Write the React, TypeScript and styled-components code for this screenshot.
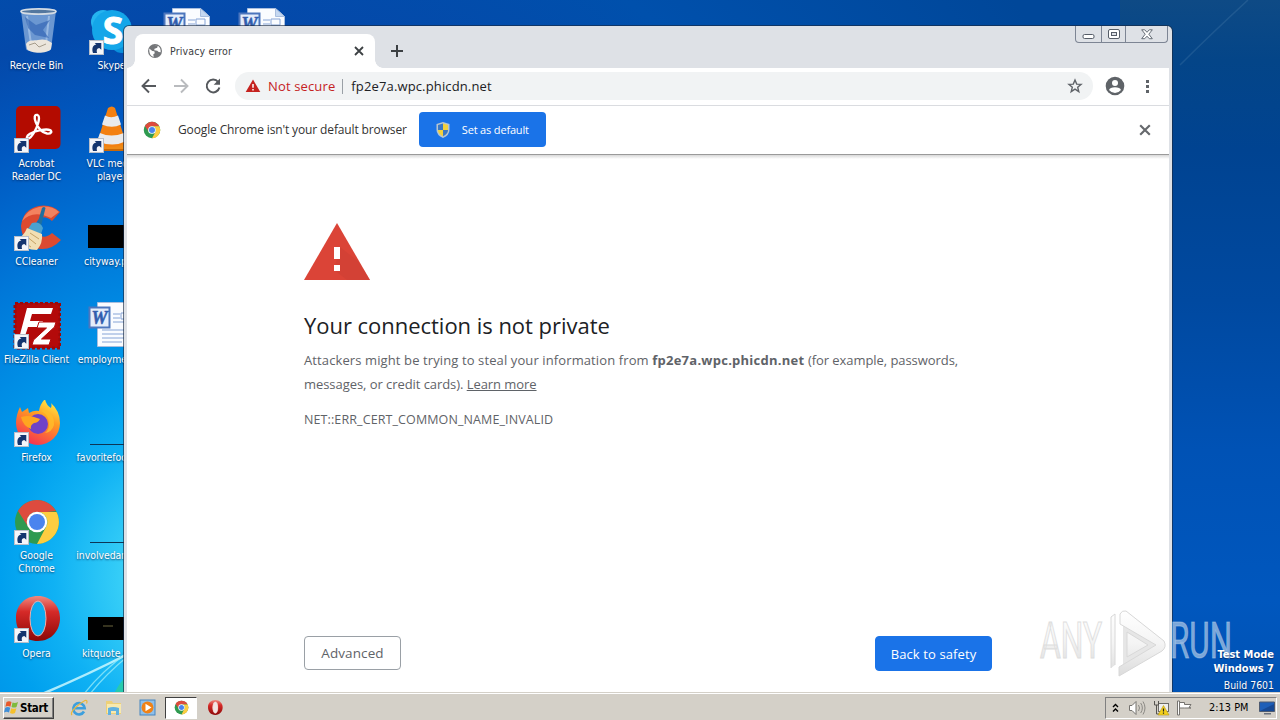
import type { ReactNode } from 'react';
import styled, { createGlobalStyle } from 'styled-components';

const GlobalStyle = createGlobalStyle`
body {
margin: 0;
overflow: hidden;
}
* {
box-sizing: border-box;
}
`

const systemFont = `"DejaVu Sans Condensed", "DejaVu Sans", sans-serif`
const uiFont = `"Open Sans", "Noto Sans", sans-serif`

const Screen = styled.div`
position: relative;
width: 1280px;
height: 720px;
overflow: hidden;
display: flex;
flex-direction: column;
font-family: ${systemFont};
background:
linear-gradient(to bottom, #0e4a85 0, #044588 60px, #004391 150px, #0049a0 300px, #0052b5 450px, #0057be 600px, #0052b4 700px) right top / 160px 720px no-repeat,
radial-gradient(circle at 200px 580px, #5fe0fa 0, #35cdf7 80px, #10b2f4 145px, #00a0ee 200px, #0088e2 290px, #006fd3 380px, #0058c0 470px, #0449aa 560px, #0050ac 720px, #004799 1000px);
`

const Streaks = styled.svg`
position: absolute;
left: 0;
top: 0;
`

/* Desktop icons */

const Desktop = styled.div`
flex: 1;
min-height: 0;
display: flex;
padding-top: 8px;
margin-left: -1px;
`

const Column = styled.div`
width: 75px;
flex: none;
`

const Shortcut = styled.div`
height: 98px;
display: flex;
flex-direction: column;
align-items: center;
gap: 3px;
`

const ShortcutLabel = styled.div`
font-size: 10.4px;
line-height: 13px;
letter-spacing: -0.03px;
color: #fff;
text-align: center;
white-space: pre;
text-shadow: 0 1px 2px rgba(0, 20, 60, 0.7);
`

/* Browser window */

const Window = styled.div`
position: absolute;
left: 124px;
top: 26px;
width: 1048px;
height: 666px;
padding: 0 3px;
display: flex;
flex-direction: column;
background: #dee1e6;
border-radius: 5px 5px 0 0;
box-shadow: 0 0 0 1px rgba(24, 42, 66, 0.65);
font-family: ${uiFont};
`

const TabStrip = styled.div`
height: 42px;
flex: none;
display: flex;
align-items: flex-end;
padding-left: 8px;
`

const Tab = styled.div`
position: relative;
width: 240px;
height: 34px;
padding: 0 11px 0 12px;
display: flex;
align-items: center;
border-radius: 8px 8px 0 0;
background: #fff;

&::before, &::after {
content: '';
position: absolute;
bottom: 0;
width: 8px;
height: 8px;
}
&::before {
left: -8px;
background: radial-gradient(circle at 0 0, transparent 7.5px, #fff 8px);
}
&::after {
right: -8px;
background: radial-gradient(circle at 100% 0, transparent 7.5px, #fff 8px);
}
`

const TabTitle = styled.div`
flex: 1;
margin-left: 7px;
font-family: ${systemFont};
font-size: 10.5px;
letter-spacing: 0.15px;
color: #3c4043;
`

const NewTab = styled.div`
height: 34px;
margin-left: 15px;
display: flex;
align-items: center;
`

const WindowButtons = styled.div`
align-self: flex-start;
margin-left: auto;
margin-right: 1px;
width: 93px;
height: 17px;
display: flex;
border: 1px solid #7d8594;
border-top: 0;
border-radius: 0 0 4px 4px;
`

const WindowButton = styled.div<{ $wide?: boolean }>`
width: ${p => p.$wide ? 42 : 25}px;
display: flex;
align-items: center;
justify-content: center;
& + & {
border-left: 1px solid #7d8594;
}
`

const Toolbar = styled.div`
height: 38px;
flex: none;
display: flex;
align-items: center;
padding: 0 0 1px 13px;
background: #fff;
border-bottom: 1px solid #dadce0;
`

const NavIcon = styled.div`
width: 32px;
flex: none;
display: flex;
`

const Omnibox = styled.div`
width: 858px;
height: 28px;
flex: none;
margin: 0 12px 0 -1px;
padding: 0 10px 0 10px;
display: flex;
align-items: center;
border-radius: 14px;
background: #f1f3f4;
font-size: 13px;
letter-spacing: 0.14px;
`

const NotSecure = styled.span`
margin-left: 7px;
padding-right: 7px;
line-height: 15px;
color: #c5221f;
border-right: 1px solid #9aa0a6;
`

const Address = styled.span`
flex: 1;
margin-left: 8px;
color: #202124;
`

const InfoBar = styled.div`
height: 49px;
flex: none;
display: flex;
align-items: center;
padding: 0 18px 1px 16px;
background: #fff;
border-bottom: 1px solid #9a9a9a;
font-size: 12px;
letter-spacing: -0.13px;
color: #333;
`

const InfoText = styled.span`
margin: 0 12px 0 17px;
`

const DefaultButton = styled.div`
width: 127px;
height: 35px;
margin-right: auto;
padding-left: 17px;
display: flex;
align-items: center;
gap: 12px;
border-radius: 4px;
background: #1a73e8;
color: #fff;
font-size: 11px;
letter-spacing: -0.17px;
`

const Page = styled.div`
flex: 1;
display: flex;
flex-direction: column;
align-items: center;
background: linear-gradient(#d8d8d8, #fff 4px);
`

const Interstitial = styled.div`
width: 688px;
height: 516px;
padding-top: 68px;
display: flex;
flex-direction: column;
color: #5f6368;
font-size: 13px;
line-height: 24px;
letter-spacing: 0.11px;
& > svg {
flex: none;
}
`

const Heading = styled.h1`
margin: 30px 0 8px;
font-size: 22px;
font-weight: 400;
line-height: 30px;
letter-spacing: -0.03px;
color: #202124;
`

const Domain = styled.b`
letter-spacing: 0.25px;
`

const Tight = styled.span`
letter-spacing: -0.06px;
`

const ErrorCode = styled.div`
margin-top: 13px;
font-size: 12.5px;
line-height: 22px;
`

const ButtonRow = styled.div`
margin-top: auto;
display: flex;
justify-content: space-between;
`

const PageButton = styled.div<{ $primary?: boolean }>`
width: ${p => p.$primary ? 117 : 97}px;
height: ${p => p.$primary ? 35 : 34}px;
display: flex;
align-items: center;
justify-content: center;
border-radius: 4px;
border: 1px solid ${p => p.$primary ? '#1a73e8' : '#9aa0a6'};
background: ${p => p.$primary ? '#1a73e8' : '#fff'};
color: ${p => p.$primary ? '#fff' : '#5f6368'};
font-size: ${p => p.$primary ? 13 : 13.5}px;
`

/* Desktop overlays */

const Watermark = styled.svg`
position: absolute;
left: 1030px;
top: 600px;
`

const BuildInfo = styled.div`
position: absolute;
right: 6px;
top: 648px;
display: flex;
flex-direction: column;
align-items: flex-end;
color: #fff;
font-size: 10.4px;
line-height: 14px;
text-shadow: 0 1px 1px rgba(0, 0, 40, 0.5);
b {
font-size: 11px;
}
span {
line-height: 18px;
}
`

/* Taskbar */

const Taskbar = styled.div`
position: relative;
height: 28px;
flex: none;
display: flex;
align-items: center;
padding: 4px 3px 1px;
background: #d4d0c8;
box-shadow: inset 0 1px #d4d0c8, inset 0 2px #fff;
`

const StartButton = styled.div`
width: 51px;
height: 22px;
display: flex;
align-items: center;
gap: 1px;
border: 1px solid;
border-color: #fff #404040 #404040 #fff;
box-shadow: inset -1px -1px #808080;
font-size: 11.5px;
font-weight: bold;
letter-spacing: -0.3px;
color: #000;
`

const QuickLaunch = styled.div`
margin-left: 8px;
display: flex;
`

const TaskButton = styled.div<{ $active?: boolean }>`
width: ${p => p.$active ? 32 : 34}px;
margin: 0 ${p => p.$active ? 1 : 0}px;
height: 22px;
display: flex;
align-items: center;
justify-content: center;
border: 1px solid;
border-color: ${p => p.$active ? '#404040 #fff #fff #404040' : 'transparent'};
background: ${p => p.$active ? '#fff' : 'transparent'};
`

const Tray = styled.div`
width: 172px;
height: 22px;
margin-left: auto;
padding: 0 1px 0 6px;
display: flex;
align-items: center;
border: 1px solid;
border-color: #808080 #fff #fff #808080;
font-size: 10.8px;
color: #000;
`

const TrayIcon = styled.div<{ $width: number }>`
width: ${p => p.$width}px;
display: flex;
`

const Clock = styled.span`
flex: 1;
letter-spacing: 0.05px;
`

function ShortcutArrow() {
    return (
        <g>
            <rect x="1.5" y="32.5" width="14" height="14" fill="#f4f6fa" stroke="#b9bfca" />
            <path d="M5 45c-1.600-5 .2-8 3.400-8.500L6.600 35h6.700v6.800l-2-1.900c-2.500.4-3 2.100-2.300 5.100z" fill="#14356f" />
        </g>
    )
}

function ChromeLogo({ size = 48 }: { size?: number }) {
    return (
        <svg width={size} height={size} viewBox="0 0 48 48">
            <circle cx="24" cy="24" r="22" fill="#2f9a50" />
            <path d="M5 13A22 22 0 0 1 43 13L33.500 14H24a10 10 0 0 0-8.700 15z" fill="#dd4b3e" />
            <path d="M43 13A22 22 0 0 1 24 46L33 29a10 10 0 0 0-9-15h19.500z" fill="#fdcd41" />
            <circle cx="24" cy="24" r="10.300" fill="#fff" />
            <circle cx="24" cy="24" r="8" fill="#4a84ee" />
        </svg>
    )
}

function Art({ link, children }: { link?: boolean, children?: ReactNode }) {
    return (
        <svg width="48" height="48" viewBox="0 0 48 48">
            {children}
            {link ? <ShortcutArrow /> : null}
        </svg>
    )
}

function RecycleBin() {
    return (
        <Art>
            <path d="M8 3h35l-5 38c-.3 4-24 4-25 0z" fill="#8fb2de" opacity=".75" />
            <path d="M14 8l4 28M36 8l-3 28" stroke="#c5dcf5" strokeWidth="2" opacity=".5" />
            <path d="M12 9l11 8 14-5-7 10 6 8-14-3-7-7z" fill="#2c5fb0" opacity=".6" />
            <path d="M13 36c3-5 8-3 12-4s9-1 14 3l-1 6c-4 5-20 5-24 0z" fill="#ebe5dc" />
            <path d="M16 37l6-2 4 4 7-3" stroke="#a59c8c" fill="none" />
            <ellipse cx="25.500" cy="3.500" rx="17.500" ry="2.600" fill="#53779f" stroke="#d3dbe4" strokeWidth="1.800" />
        </Art>
    )
}

function Skype() {
    return (
        <Art link>
            <circle cx="15" cy="14" r="12" fill="#25b4ef" />
            <circle cx="34" cy="33" r="12" fill="#0a90dc" />
            <circle cx="24" cy="22" r="20" fill="#14a6e9" />
            <text x="25" y="36" fontFamily="Open Sans" fontWeight="bold" fontSize="37" textAnchor="middle" fill="#fff" stroke="#fff">S</text>
        </Art>
    )
}

function Acrobat() {
    return (
        <Art link>
            <rect x="3" y="0" width="44.500" height="43" rx="5" fill="#b30b00" />
            <path d="M24.500 9c-3-1-3.600 3-1.800 7 1.900 5 6 10.500 11.300 11.500 4 .6 5.700-2 3-3.400-3.800-1.700-15 .6-20.500 4-3 1.700-3.500 5-1.300 4.600 3.800-1 8.800-10.500 10.300-17 .9-4 .8-6-1-6.700z" fill="none" stroke="#fff" strokeWidth="2.400" />
        </Art>
    )
}

function Vlc() {
    return (
        <Art link>
            <path d="M8 33h33l5 11H2z" fill="#ee8a17" />
            <path d="M20 2q4-3 7 0l11 35q-14 8-29 0z" fill="#f38011" />
            <path d="M17 9.500q6 3.500 13 0l3 9q-9 4.500-19 0zM12 27q11 5 24 0l2.500 8q-14 7-29.500 0z" fill="#e9eaec" />
            <path d="M1 43h46v2H1z" fill="#c96807" />
        </Art>
    )
}

function CCleaner() {
    return (
        <Art link>
            <path d="M47 8Q38 0 26 2 10 5 8 22q1 16 14 22 15 4 26-8L39 29q-8 7-14 1-5-8 0-14 6-6 14 1z" fill="#dc4a30" />
            <path d="M46 8Q38 1 26 3 13 6 9 17 20 5 38 14z" fill="#f3825f" />
            <path d="M29 4q2-2 3.500 0L28 22l-4-1z" fill="#1f6f9f" />
            <path d="M19 19q8-2 11 5l-2 6-13-5z" fill="#4aa2d0" />
            <path d="M14 24l15 6q1 9-5 16-12 0-21-10 8-4 11-12z" fill="#f1dfb4" />
            <path d="M13 32l10 8M17 29l9 6M9 37l9 6" stroke="#c5a264" />
        </Art>
    )
}

function FileZilla() {
    return (
        <Art link>
            <rect x="2" y="1" width="45" height="45" fill="#b30a0a" stroke="#9c0909" strokeWidth="3" strokeDasharray="3 2" />
            <path d="M14 6h26l-2 6H19l-2 7h13l-2 6H15l-5 15H5z" fill="#fff" />
            <path d="M26 20h17l-1.500 5-13 12H38l-2 6H19l1.500-5 13-12H24z" fill="#fff" stroke="#b30a0a" />
        </Art>
    )
}

function Firefox() {
    return (
        <Art link>
            <defs>
                <linearGradient id="fox" x1=".8" y1="0" x2=".3" y2="1">
                    <stop offset="0" stopColor="#fff04a" />
                    <stop offset=".4" stopColor="#ff9a22" />
                    <stop offset="1" stopColor="#f62d55" />
                </linearGradient>
            </defs>
            <path d="M7 7l2 5 6-4 1 5q5-3 10-2 1-7 6-12 1 6 6 9 1-3 0-5 9 8 9 20a22 22 0 0 1-44 0Q3 15 7 7z" fill="url(#fox)" />
            <circle cx="25" cy="24" r="10" fill="#6f42c8" />
            <path d="M8 17q7-2 13 0l6 2q-2 4-6 4-4 2-3 6-8-3-10-12z" fill="#ffa520" />
            <path d="M28 11q7 3 8 11 1 7-4 11 7-1 9-8 1-11-9-15z" fill="#ffbe2b" opacity=".8" />
        </Art>
    )
}

function OperaLogo({ size = 48, link }: { size?: number, link?: boolean }) {
    return (
        <svg width={size} height={size} viewBox="0 0 48 48">
            <defs>
                <linearGradient id="opera" x1="0" y1="0" x2="0" y2="1">
                    <stop offset="0" stopColor="#f08a80" />
                    <stop offset=".35" stopColor="#d52a28" />
                    <stop offset="1" stopColor="#8c0707" />
                </linearGradient>
            </defs>
            <path fillRule="evenodd" d="M25 0c13 0 22 10 22 22s-8 23-22 23S3 35 3 22 12 0 25 0zM25 5c-5 0-8 7-8 17s3 18 8 18 8-8 8-18-3-17-8-17z" fill="url(#opera)" />
            <ellipse cx="25" cy="22.500" rx="8" ry="17.500" fill={link ? 'none' : '#f3e4e2'} stroke="#f4aaa5" strokeWidth="1" />
            {link ? <ShortcutArrow /> : null}
        </svg>
    )
}

function WordFile() {
    return (
        <Art>
            <path d="M9.500.5h28l9 8v36h-37z" fill="#fafcff" stroke="#a9bede" />
            <path d="M37.500.5v8h9z" fill="#c5d8f1" stroke="#a9bede" />
            <path d="M25 12h7M25 16h7M33 11h9v6h-9zM25 20h17M14 28h28M14 32h28M14 36h28M14 40h20" stroke="#86a4d6" fill="none" />
            <rect x="1.500" y="5.500" width="20" height="20" fill="#e4edfb" stroke="#4d76bd" strokeWidth="2" />
            <text x="11.500" y="21.500" fontFamily="Liberation Serif" fontWeight="bold" fontStyle="italic" fontSize="18" textAnchor="middle" fill="#315dae" stroke="#315dae" strokeWidth=".5">W</text>
        </Art>
    )
}

function BlackPicture({ line, mark }: { line?: boolean, mark?: boolean }) {
    return (
        <Art>
            {line ? <rect x="2" y="44" width="46" height="1" fill="#0d3556" /> : <rect y="21" width="48" height="23" />}
            {mark ? <rect x="15" y="29" width="10" height="2" fill="#36331f" /> : null}
        </Art>
    )
}

const columns: { label: string, icon: ReactNode }[][] = [
    [
        { label: 'Recycle Bin', icon: <RecycleBin /> },
        { label: 'Acrobat\nReader DC', icon: <Acrobat /> },
        { label: 'CCleaner', icon: <CCleaner /> },
        { label: 'FileZilla Client', icon: <FileZilla /> },
        { label: 'Firefox', icon: <Firefox /> },
        { label: 'Google\nChrome', icon: <Art link><ChromeLogo /></Art> },
        { label: 'Opera', icon: <OperaLogo link /> },
    ],
    [
        { label: 'Skype', icon: <Skype /> },
        { label: 'VLC media\nplayer', icon: <Vlc /> },
        { label: 'cityway.png', icon: <BlackPicture /> },
        { label: 'employment...', icon: <WordFile /> },
        { label: 'favoritefood.rtf', icon: <BlackPicture line /> },
        { label: 'involvedand.rtf', icon: <BlackPicture line /> },
        { label: 'kitquote.png', icon: <BlackPicture mark /> },
    ],
    [{ label: '', icon: <WordFile /> }],
    [{ label: '', icon: <WordFile /> }],
]

function Globe() {
    return (
        <svg width="16" height="16" viewBox="0 0 16 16">
            <circle cx="8" cy="8" r="7" fill="#747679" />
            <path d="M2.300 5.500l3 2.600 2 .2.500 2-1.500 1 .4 2.700C3.500 13.200 2 10.300 2.300 5.500zM7.500 2.200l3.200.5-.5 2-2.700 1-.3 1.500 3 .5 1.500 1.400 2 .2c.3-3.200-1-7.600-6.200-7.100z" fill="#fff" />
        </svg>
    )
}

function Cross({ size, color }: { size: number, color: string }) {
    return (
        <svg width={size} height={size} viewBox="0 0 10 10">
            <path d="M1 1l8 8M9 1L1 9" stroke={color} strokeWidth="1.800" />
        </svg>
    )
}

function Shield() {
    return (
        <svg width="14" height="16" viewBox="0 0 14 16">
            <path d="M7 0l6.500 2v6q0 5-6.500 8Q.5 13 .5 8V2z" fill="#b9c6cf" />
            <path d="M7 1.500V8H2V3z" fill="#3a78c5" />
            <path d="M7 1.500L12 3v5H7z" fill="#f3d13c" />
            <path d="M2 8h5v6.300Q2 12 2 8z" fill="#f3d13c" />
            <path d="M12 8H7v6.300Q12 12 12 8z" fill="#3a78c5" />
        </svg>
    )
}

function TabBar() {
    return (
        <TabStrip>
            <Tab>
                <Globe />
                <TabTitle>Privacy error</TabTitle>
                <Cross size={10} color="#3c4043" />
            </Tab>
            <NewTab>
                <svg width="14" height="14"><path d="M7 1v12M1 7h12" stroke="#3c4043" strokeWidth="2" /></svg>
            </NewTab>
            <WindowButtons>
                <WindowButton>
                    <svg width="13" height="13"><rect x="1" y="6.500" width="11" height="4" rx="1.500" fill="#fff" stroke="#565d68" /></svg>
                </WindowButton>
                <WindowButton>
                    <svg width="12" height="11"><rect x=".5" y=".5" width="11" height="9" rx="1.500" fill="#fff" stroke="#565d68" /><rect x="3.500" y="3.500" width="5" height="3" fill="#dee1e6" stroke="#565d68" /></svg>
                </WindowButton>
                <WindowButton $wide>
                    <svg width="12" height="11"><path d="M.7.800h3L6 3.300 8.300.800h3L7.800 5.200l3.500 4.500h-3L6 7.200 3.700 9.700h-3l3.500-4.500z" fill="#fff" stroke="#565d68" strokeWidth=".9" /></svg>
                </WindowButton>
            </WindowButtons>
        </TabStrip>
    )
}

function AddressBar() {
    return (
        <Toolbar>
            <NavIcon>
                <svg width="18" height="16"><path d="M16 8H3M9 1.500L2.500 8 9 14.500" stroke="#56595d" strokeWidth="1.900" fill="none" /></svg>
            </NavIcon>
            <NavIcon>
                <svg width="18" height="16"><path d="M2 8h13M9 1.500L15.500 8 9 14.500" stroke="#b9bbbe" strokeWidth="1.900" fill="none" /></svg>
            </NavIcon>
            <NavIcon>
                <svg width="18" height="18"><path d="M14.200 5A6.400 6.400 0 1 0 15.400 10.500" stroke="#56595d" strokeWidth="2" fill="none" /><path d="M16 1.500v6.300H9.700z" fill="#56595d" /></svg>
            </NavIcon>
            <Omnibox>
                <svg width="16" height="14" viewBox="0 0 16 14"><path d="M8 .5L15.300 13H.7z" fill="#c5221f" /><path d="M8 5v3.800M8 10v1.600" stroke="#fff" strokeWidth="1.500" /></svg>
                <NotSecure>Not secure</NotSecure>
                <Address>fp2e7a.wpc.phicdn.net</Address>
                <svg width="16" height="16" viewBox="0 0 16 16"><path d="M8 2l1.700 4.100 4.400.3-3.400 2.900 1.100 4.300L8 11.200l-3.800 2.400 1.100-4.300L1.900 6.400l4.400-.3z" fill="none" stroke="#5f6368" strokeWidth="1.400" /></svg>
            </Omnibox>
            <svg width="20" height="20" viewBox="0 0 20 20">
                <circle cx="10" cy="10" r="9.300" fill="#5f6368" />
                <circle cx="10" cy="7" r="3" fill="#fff" />
                <path d="M4 14q1-2.800 6-2.800t6 2.800q-2.500 3-6 3t-6-3z" fill="#fff" />
            </svg>
            <svg width="40" height="16"><path d="M21 2h3v3h-3zM21 7h3v3h-3zM21 12h3v3h-3z" fill="#5f6368" /></svg>
        </Toolbar>
    )
}

function PrivacyError() {
    return (
        <Page>
            <Interstitial>
                <svg width="66" height="57" viewBox="0 0 66 57">
                    <path d="M33 0l33 57H0z" fill="#db4437" />
                    <path d="M36 24l18 14 12 19H43L30 47z" fill="#c93f33" opacity=".45" />
                    <path d="M30 24h6v12h-6zM30 42h6v6h-6z" fill="#fff" />
                </svg>
                <Heading>Your connection is not private</Heading>
                <div>
                    Attackers might be trying to steal your information from <Domain>fp2e7a.wpc.phicdn.net</Domain>{' '}
                    <Tight>
                        (for example, passwords,<br />
                        messages, or credit cards). <u>Learn more</u>
                    </Tight>
                </div>
                <ErrorCode>NET::ERR_CERT_COMMON_NAME_INVALID</ErrorCode>
                <ButtonRow>
                    <PageButton>Advanced</PageButton>
                    <PageButton $primary>Back to safety</PageButton>
                </ButtonRow>
            </Interstitial>
        </Page>
    )
}

function AnyRun() {
    return (
        <Watermark width="210" height="80" fontFamily="Roboto" fontWeight="400" fontSize="50">
            <defs>
                <linearGradient id="mark" x1="0" y1="0" x2="0" y2="1">
                    <stop offset="0" stopColor="#fff" />
                    <stop offset=".5" stopColor="#f4f4f4" />
                    <stop offset="1" stopColor="#dcdcdc" />
                </linearGradient>
            </defs>
            <text x="10" y="58" textLength="62" lengthAdjust="spacingAndGlyphs" fill="url(#mark)" stroke="#dedede" strokeWidth="1.200">ANY</text>
            <path d="M93 22l38 22-38 23z" fill="#e6e6e6" />
            <path d="M81 68V17l4-3v51M90 14v10l36 21-37 22v9l43-25q5-4 2-10L96 11q-4-1-6 3zM97 32v25l21-12z" fill="url(#mark)" stroke="#d8d8d8" />
            <text x="140" y="58" textLength="62" lengthAdjust="spacingAndGlyphs" fill="#b4cde8" fillOpacity=".7" stroke="#b4cde8" strokeOpacity=".5" strokeWidth="1">RUN</text>
        </Watermark>
    )
}

function WindowsTaskbar() {
    return (
        <Taskbar>
            <StartButton>
                <svg width="15" height="15" viewBox="0 0 15 15">
                    <path d="M2.500 2q2.500-1.400 5 0L6.400 6.700q-2.500-1.200-5 0z" fill="#e8592a" />
                    <path d="M8.500 2.500q2.500 1.200 5.500-.5l-1.500 5q-2.300 1.200-5 0z" fill="#7fba3c" />
                    <path d="M1.200 7.700q2.500-1.200 5 0L5 12.500q-2.400-1.300-5 0z" fill="#3f8fd8" />
                    <path d="M7.200 8.200q2.500 1.200 5.200 0L11 13q-2.500 1.400-5 0z" fill="#f5c02c" />
                </svg>
                Start
            </StartButton>
            <QuickLaunch>
                <TaskButton>
                    <svg width="18" height="18" viewBox="0 0 18 18">
                        <path d="M14 12.500A5.700 5.700 0 1 1 14.700 9.200H5" fill="none" stroke="#3d9fdd" strokeWidth="2.600" />
                        <path d="M2 16q-2-2 3-7t10-7.500q3-.5 1.500 3" fill="none" stroke="#eab73a" strokeWidth="1.200" />
                    </svg>
                </TaskButton>
                <TaskButton>
                    <svg width="17" height="17" viewBox="0 0 17 17">
                        <path d="M1 2h6l1 2h8v11H1z" fill="#edd078" />
                        <path d="M2 5h14v9H2z" fill="#f8e9ae" />
                        <path d="M3 16V9q5-2 11 0v7h-3v-4H6v4z" fill="#62b1df" />
                    </svg>
                </TaskButton>
                <TaskButton>
                    <svg width="17" height="17" viewBox="0 0 17 17">
                        <rect x="1" y="1" width="15" height="15" fill="#8fc0ea" stroke="#4785bf" />
                        <circle cx="8.500" cy="8.500" r="6" fill="#f08217" />
                        <path d="M6.500 4.800l6 3.700-6 3.700z" fill="#fff" />
                    </svg>
                </TaskButton>
                <TaskButton $active><ChromeLogo size={15} /></TaskButton>
                <TaskButton><OperaLogo size={16} /></TaskButton>
            </QuickLaunch>
            <Tray>
                <TrayIcon $width={16}>
                    <svg width="7" height="10"><path d="M1 4l2.500-2.500L6 4M1 8.500L3.500 6 6 8.500" fill="none" stroke="#000" strokeWidth="1.400" /></svg>
                </TrayIcon>
                <TrayIcon $width={25}>
                    <svg width="18" height="16" viewBox="0 0 18 16">
                        <path d="M1.500 5.500H4l4-4v13l-4-4H1.500z" fill="#fff" stroke="#75736f" />
                        <path d="M10.500 5q2 3 0 6M12.700 3q3.300 5 0 10M15 1.500q4 6.500 0 13" fill="none" stroke="#8b8984" />
                    </svg>
                </TrayIcon>
                <TrayIcon $width={23}>
                    <svg width="17" height="16" viewBox="0 0 17 16">
                        <rect x="5.500" y="3.500" width="10" height="8" fill="#eee" stroke="#6d6b67" />
                        <path d="M1.500 1v4h4V1M3.500 5v9h4" fill="none" stroke="#55534f" />
                        <path d="M10.500 5.500L16 15H5z" fill="#f3d01d" stroke="#b89815" strokeWidth=".6" />
                        <path d="M10.500 8.500v3M10.500 12.500v1.200" stroke="#222" strokeWidth="1.200" />
                    </svg>
                </TrayIcon>
                <TrayIcon $width={33}>
                    <svg width="17" height="16" viewBox="0 0 17 16">
                        <path d="M1.500 1h2v14h-2z" fill="#fff" stroke="#75736f" />
                        <path d="M3.500 2.500h5v2H15l-2 3 2 .5H8.500V8h-5z" fill="#fff" stroke="#75736f" />
                    </svg>
                </TrayIcon>
                <Clock>2:13 PM</Clock>
                <svg width="16" height="14" viewBox="0 0 16 14">
                    <path d="M.5 1h15v9.500H.5z" fill="#1e5fb8" stroke="#4d5a70" />
                    <path d="M1 10l14-7v7z" fill="#174994" />
                    <path d="M5 12h7v1.500H5z" fill="#69707d" />
                </svg>
            </Tray>
        </Taskbar>
    )
}

export default function App() {
    return (
        <Screen>
            <GlobalStyle />
            <Streaks width="1280" height="692">
                <path d="M42 694Q85 676 130 653" stroke="#d4fbff" strokeWidth="2.500" fill="none" opacity=".8" />
                <path d="M84 694Q100 673 128 652M90 694Q104 676 128 656" stroke="#9ceefa" strokeWidth="1.300" fill="none" opacity=".75" />
                <path d="M114 694q5-11 14-20v20z" fill="#2bcf9c" opacity=".8" />
                <path d="M1248 0Q1210 35 1180 65" stroke="#6e9ac0" strokeWidth="1.500" fill="none" opacity=".2" />
            </Streaks>
            <Desktop>
                {columns.map((items, i) => (
                    <Column key={i}>
                        {items.map((item, j) => (
                            <Shortcut key={j}>
                                {item.icon}
                                <ShortcutLabel>{item.label}</ShortcutLabel>
                            </Shortcut>
                        ))}
                    </Column>
                ))}
            </Desktop>
            <Window>
                <TabBar />
                <AddressBar />
                <InfoBar>
                    <ChromeLogo size={18} />
                    <InfoText>Google Chrome isn't your default browser</InfoText>
                    <DefaultButton><Shield />Set as default</DefaultButton>
                    <Cross size={12} color="#66696d" />
                </InfoBar>
                <PrivacyError />
            </Window>
            <AnyRun />
            <BuildInfo>
                <b>Test Mode</b>
                <b>Windows 7</b>
                <span>Build 7601</span>
            </BuildInfo>
            <WindowsTaskbar />
        </Screen>
    )
}
